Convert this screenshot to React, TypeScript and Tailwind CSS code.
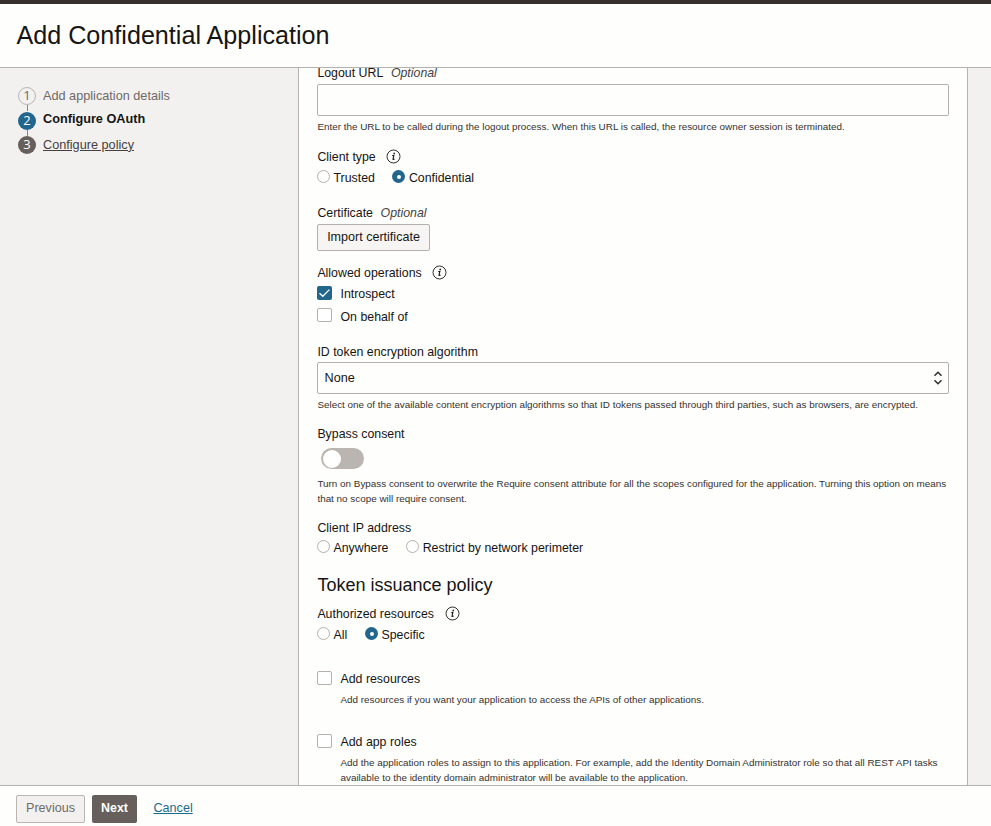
import type { ReactNode } from "react";

const helpClass = "text-[9.89px] leading-[15px] text-[#35312f] whitespace-pre";
const stepClass =
  "flex size-[18px] items-center justify-center rounded-full font-['Open_Sans'] text-[13px] leading-4 pb-0.5";

function Label({ children, className = "" }: { children: ReactNode; className?: string }) {
  return <div className={`flex h-4 items-center whitespace-pre leading-4 ${className}`}>{children}</div>;
}

function InfoIcon({ className = "" }: { className?: string }) {
  return (
    <svg className={`-mt-0.5 size-[15px] shrink-0 ${className}`} viewBox="0 0 15 15" fill="none">
      <circle cx="7.5" cy="7.5" r="6.5" stroke="#35312f" strokeWidth="1" />
      <circle cx="8.2" cy="4.4" r="0.8" fill="#161513" />
      <path d="M6.2 6.7L7.9 6.3L7 10.2C7 10.8 7.7 10.6 8.5 9.9" stroke="#161513" strokeWidth="1.1" />
    </svg>
  );
}

function Radio({ checked = false }: { checked?: boolean }) {
  return checked ? (
    <span className="-mt-[3px] flex size-[13px] shrink-0 items-center justify-center rounded-full bg-[#22668d]">
      <span className="size-1 rounded-full bg-white" />
    </span>
  ) : (
    <span className="-mt-[3px] size-[13px] shrink-0 rounded-full border border-[#b5b0ac] bg-white" />
  );
}

function Checkbox({ checked = false }: { checked?: boolean }) {
  return checked ? (
    <span className="flex h-[14px] w-[15px] shrink-0 items-center justify-center rounded-[2px] bg-[#22668d]">
      <svg className="h-[14px] w-[15px]" viewBox="0 0 15 14" fill="none">
        <path d="M2.5 7.2L5.8 10.3L12.4 3.6" stroke="#fff" strokeWidth="1.3" />
      </svg>
    </span>
  ) : (
    <span className="h-[14px] w-[15px] shrink-0 rounded-[2px] border border-[#b5b0ac] bg-white" />
  );
}

function Option({ checked, children, className = "" }: { checked?: boolean; children: ReactNode; className?: string }) {
  return (
    <div className={`flex h-4 items-start ${className}`}>
      <Checkbox checked={checked} />
      <span className="ml-[8.5px] whitespace-pre leading-4">{children}</span>
    </div>
  );
}

export default function App() {
  return (
    <div
      className="flex h-[826px] w-[991px] flex-col overflow-hidden bg-[#fefefc] text-[12.35px] text-[#161513]"
      style={{ fontFamily: '"Liberation Sans", Arial, sans-serif' }}
    >
      <div className="h-1 shrink-0 bg-[#36312d]" />
      <header className="flex h-16 shrink-0 items-center border-b border-[#b5b3b1] pb-0.5 pl-[16.5px]">
        <h1 className="whitespace-pre text-[25.15px] leading-8">Add Confidential Application</h1>
      </header>

      <div className="flex h-[717px] shrink-0">
        <nav className="w-[298px] shrink-0 bg-[#f2f1f0] pl-[18px] pt-[19px] text-[12.7px]">
          <div className="flex h-[18px] items-center">
            <span className={`${stepClass} border border-[#bbb5b1] text-[#6f6a66]`}>1</span>
            <span className="ml-[7px] whitespace-pre leading-4 text-[#6f6a66]">Add application details</span>
          </div>
          <div className="ml-[9px] h-1.5 w-px bg-[#8b8580]" />
          <div className="flex h-[19px] items-center">
            <span className={`${stepClass} bg-[#22668d] text-white`}>2</span>
            <span className="ml-[7px] whitespace-pre pb-[3px] font-bold leading-4">Configure OAuth</span>
          </div>
          <div className="ml-[9px] h-1.5 w-px bg-[#8b8580]" />
          <div className="flex h-[18px] items-center">
            <span className={`${stepClass} bg-[#665f5b] text-white`}>3</span>
            <span className="ml-[7px] whitespace-pre pb-px leading-4 text-[#45413e] underline underline-offset-1">Configure policy</span>
          </div>
        </nav>

        <main className="w-[670px] shrink-0 overflow-hidden border-x border-[#b5b3b1] pl-[18px] pr-[18px]">
          <div className="-mt-[3px] flex flex-col items-start">
            <Label className="pl-[0.4px]">
              Logout URL<em className="ml-[7.6px] text-[#45413e]">Optional</em>
            </Label>
            <div className="mt-[3px] h-8 w-[632px] rounded-[2px] border border-[#b5b0ac]" />
            <p className={`mt-[3px] pl-[0.4px] ${helpClass}`}>
              Enter the URL to be called during the logout process. When this URL is called, the resource owner session is terminated.
            </p>

            <Label className="mt-[15px] pl-[0.4px]">
              Client type
              <InfoIcon className="ml-[10px]" />
            </Label>
            <Label className="mt-[5px]">
              <Radio />
              <span className="ml-[3.5px]">Trusted</span>
              <span className="w-[17.5px]" />
              <Radio checked />
              <span className="ml-[3.5px]">Confidential</span>
            </Label>

            <Label className="mt-[19px] pl-[0.4px]">
              Certificate<em className="ml-[7.6px] text-[#45413e]">Optional</em>
            </Label>
            <button className="mt-[3px] h-[27px] w-[113px] rounded-[2px] border border-[#b5b0ac] bg-[#f7f5f4] pb-0.5 text-[12.55px] leading-4">
              Import certificate
            </button>

            <Label className="mt-[14px] pl-[0.4px]">
              Allowed operations
              <InfoIcon className="ml-[10px]" />
            </Label>
            <Option checked className="mt-[5px]">Introspect</Option>
            <div className="mt-[6px] flex h-4 items-start">
              <Checkbox />
              <span className="ml-[8.5px] whitespace-pre pt-px leading-4">On behalf of</span>
            </div>

            <Label className="mt-5 pl-[0.4px]">ID token encryption algorithm</Label>
            <div className="mt-[2px] flex h-8 w-[632px] items-center justify-between rounded-[2px] border border-[#b5b0ac] pl-[6.5px] pr-[5px]">
              <span className="text-[12.7px] leading-4">None</span>
              <svg className="h-4 w-[10px]" viewBox="0 0 10 16" fill="none" stroke="#35312f" strokeWidth="1.6">
                <path d="M1.5 5.7L5 2.3L8.5 5.7M1.5 10.3L5 13.7L8.5 10.3" />
              </svg>
            </div>
            <p className={`mt-[3px] pl-[0.4px] ${helpClass}`}>
              Select one of the available content encryption algorithms so that ID tokens passed through third parties, such as browsers, are encrypted.
            </p>

            <Label className="mt-[14px] pl-[0.4px]">Bypass consent</Label>
            <div className="ml-1 mt-[6px] flex h-[21px] w-[43px] items-center rounded-full bg-[#bbb5b1] pl-0.5">
              <span className="size-[18px] rounded-full bg-white" />
            </div>
            <p className={`mt-[7px] pl-[0.4px] ${helpClass}`}>
              Turn on Bypass consent to overwrite the Require consent attribute for all the scopes configured for the application. Turning this option on means
              <br />
              that no scope will require consent.
            </p>

            <Label className="mt-[14px] pl-[0.4px]">Client IP address</Label>
            <Label className="mt-1">
              <Radio />
              <span className="ml-[3.5px]">Anywhere</span>
              <span className="w-[17.8px]" />
              <Radio />
              <span className="ml-[3.5px]">Restrict by network perimeter</span>
            </Label>

            <h2 className="mt-[17px] whitespace-pre pl-[0.4px] text-[18px] leading-6">Token issuance policy</h2>
            <Label className="mt-[9px] pl-[0.4px]">
              Authorized resources
              <InfoIcon className="ml-[10.7px]" />
            </Label>
            <Label className="mt-[5px]">
              <Radio />
              <span className="ml-[3.5px]">All</span>
              <span className="w-[17.8px]" />
              <Radio checked />
              <span className="ml-[3.5px]">Specific</span>
            </Label>

            <Option className="mt-7">Add resources</Option>
            <p className={`ml-[23.5px] mt-[5px] ${helpClass}`}>
              Add resources if you want your application to access the APIs of other applications.
            </p>
            <Option className="mt-[27px]">Add app roles</Option>
            <p className={`ml-[23.5px] mt-[5px] ${helpClass}`}>
              Add the application roles to assign to this application. For example, add the Identity Domain Administrator role so that all REST API tasks
              <br />
              available to the identity domain administrator will be available to the application.
            </p>
          </div>
        </main>
        <aside className="flex-1 bg-[#f2f1f0]" />
      </div>

      <footer className="flex h-[41px] shrink-0 items-start border-t border-[#b5b3b1] pl-4 pt-[9px]">
        <button className="h-7 w-[69px] rounded-[2px] border border-[#bbb5b1] bg-[#f2f1f0] pb-[3px] text-[12.6px] leading-4 text-[#6f6a66]">Previous</button>
        <button className="ml-[7px] h-7 w-[45px] rounded-[2px] bg-[#665f5b] pb-[3px] text-[12.4px] font-bold leading-4 text-white">Next</button>
        <a className="ml-[16.5px] mt-[5px] text-[12.6px] leading-4 text-[#1a6a8e] underline underline-offset-1">Cancel</a>
      </footer>
    </div>
  );
}
